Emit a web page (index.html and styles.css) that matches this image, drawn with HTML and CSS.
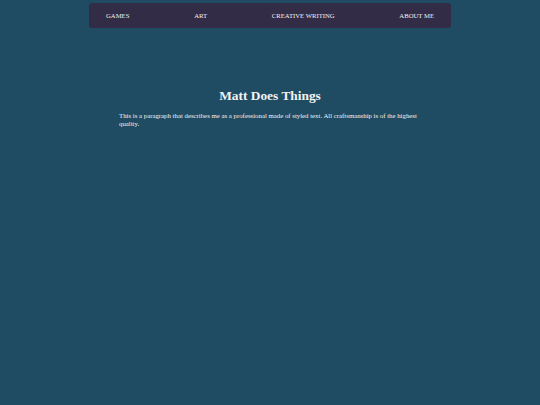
FILE: index.html
```html
<!DOCTYPE html>
<html lang="en">
<head>
<meta charset="utf-8">
<title>Matt Does Things</title>
<link rel="stylesheet" href="styles.css">
</head>
<body>
  <nav class="topnav">
    <a class="topnav-link" href="#">GAMES</a>
    <a class="topnav-link" href="#">ART</a>
    <a class="topnav-link" href="#">CREATIVE WRITING</a>
    <a class="topnav-link" href="#">ABOUT ME</a>
  </nav>
  <main class="intro">
    <h1 class="intro-title">Matt Does Things</h1>
    <p class="intro-text">This is a paragraph that describes me as a professional made of styled text. All craftsmanship is of the highest quality.</p>
  </main>
</body>
</html>
```

FILE: styles.css
```css
html, body {
  margin: 0;
  padding: 0;
}

body {
  background: #1f4b63;
  color: #f2f2f2;
  font-family: "Liberation Serif", "Times New Roman", serif;
  min-height: 405px;
}

.topnav {
  width: 362px;
  height: 25px;
  margin: 3px auto 0;
  padding: 0 17px;
  box-sizing: border-box;
  background: #332c46;
  border-radius: 3px;
  display: flex;
  justify-content: space-between;
  align-items: center;
}

.topnav-link {
  color: #f2f2f2;
  text-decoration: none;
  font-size: 6.7px;
  line-height: 8px;
}

.intro {
  width: 302px;
  margin: 60px auto 0;
}

.intro-title {
  margin: 0;
  text-align: center;
  font-size: 13.4px;
  line-height: 16px;
  font-weight: bold;
}

.intro-text {
  margin: 8px 0 0;
  font-size: 6.8px;
  line-height: 8px;
}
```
